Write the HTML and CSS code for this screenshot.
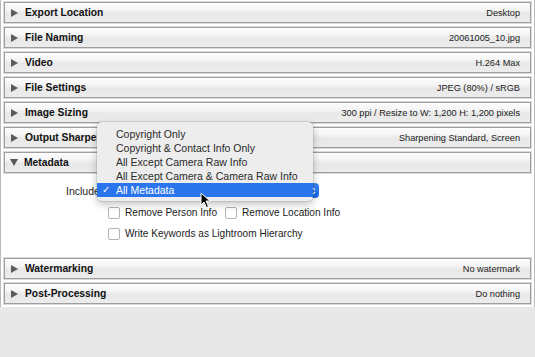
FILE: index.html
```html
<!DOCTYPE html>
<html lang="en">
<head>
  <meta charset="UTF-8">
  <meta name="viewport" content="width=device-width, initial-scale=1.0">
  <title>Export Settings</title>
  <link rel="stylesheet" href="styles.css">
</head>
<body>
  <div class="panel">
    <div class="head"><span class="tri"></span><span class="title">Export Location</span><span class="value">Desktop</span></div>
    <div class="head"><span class="tri"></span><span class="title">File Naming</span><span class="value">20061005_10.jpg</span></div>
    <div class="head"><span class="tri"></span><span class="title">Video</span><span class="value">H.264 Max</span></div>
    <div class="head"><span class="tri"></span><span class="title">File Settings</span><span class="value">JPEG (80%) / sRGB</span></div>
    <div class="head"><span class="tri"></span><span class="title">Image Sizing</span><span class="value">300 ppi / Resize to W: 1,200 H: 1,200 pixels</span></div>
    <div class="head"><span class="tri"></span><span class="title">Output Sharpening</span><span class="value">Sharpening Standard, Screen</span></div>
    <div class="head open"><span class="tri down"></span><span class="title">Metadata</span><span class="value"></span></div>

    <div class="meta-body">
      <div class="include-row">
        <span class="include-label">Include:</span>
        <div class="select">
          <span class="select-text">All Metadata</span>
          <svg class="chev" width="6" height="10" viewBox="0 0 6 10"><path d="M1 4 L3 2 L5 4 M1 6 L3 8 L5 6" fill="none" stroke="#fff" stroke-width="1.2"/></svg>
          <!-- open popup menu -->
          <div class="menu">
            <div class="menu-item">Copyright Only</div>
            <div class="menu-item">Copyright &amp; Contact Info Only</div>
            <div class="menu-item">All Except Camera Raw Info</div>
            <div class="menu-item">All Except Camera &amp; Camera Raw Info</div>
            <div class="menu-item selected"><span class="check">✓</span>All Metadata</div>
          </div>
          <svg class="cursor" width="12" height="17" viewBox="0 0 12 17"><path d="M1 1 L1 13 L4 10 L6.5 15.5 L8.5 14.5 L6 9 L10 9 Z" fill="#000" stroke="#fff" stroke-width="1"/></svg>
        </div>
      </div>
      <div class="checks">
        <div class="check-row">
          <span class="box"></span><span class="check-label">Remove Person Info</span>
          <span class="box second"></span><span class="check-label">Remove Location Info</span>
        </div>
        <div class="check-row">
          <span class="box"></span><span class="check-label">Write Keywords as Lightroom Hierarchy</span>
        </div>
      </div>
    </div>

    <div class="head"><span class="tri"></span><span class="title">Watermarking</span><span class="value">No watermark</span></div>
    <div class="head last"><span class="tri"></span><span class="title">Post-Processing</span><span class="value">Do nothing</span></div>
  </div>
  <div class="footer"></div>
</body>
</html>
```

FILE: styles.css
```css
body {
  margin: 0;
  font-family: "Liberation Sans", Arial, sans-serif;
  background: #e8e8e8;
  color: #1a1a1a;
  overflow: hidden;
}
.panel {
  background: #fff;
  border-left: 1px solid #b9b9b9;
  border-right: 1px solid #b9b9b9;
  padding: 2px 3px 1px 3px;
}
.head {
  display: flex;
  align-items: center;
  height: 19px;
  margin-bottom: 4px;
  border: 1px solid #9e9e9e;
  box-shadow: 0 0 0 1px #dadada, inset 0 1px 0 #fff;
  background: linear-gradient(to bottom, #fcfcfc 0%, #f5f5f5 35%, #e8e8e8 55%, #ececec 100%);
}
.head.open {
  margin-bottom: 0;
}
.head.last {
  margin-bottom: 2px;
}
.tri {
  width: 0;
  height: 0;
  margin-left: 6px;
  border-top: 4.5px solid transparent;
  border-bottom: 4.5px solid transparent;
  border-left: 7px solid #5a5a5a;
}
.tri.down {
  margin-left: 5px;
  border-left: 4.5px solid transparent;
  border-right: 4.5px solid transparent;
  border-top: 7px solid #5a5a5a;
  border-bottom: 0;
}
.title {
  margin-left: 7px;
  font-size: 10.3px;
  font-weight: bold;
  color: #111;
}
.tri.down + .title {
  margin-left: 6px;
}
.value {
  margin-left: auto;
  margin-right: 10px;
  font-size: 9.2px;
  color: #222;
}
.meta-body {
  height: 70px;
  padding-top: 10px;
  margin-bottom: 5px;
}
.include-row {
  display: flex;
  align-items: center;
  height: 15px;
  padding-left: 62px;
}
.include-label {
  width: 31px;
  font-size: 10.5px;
  color: #222;
}
.select {
  position: relative;
  display: flex;
  align-items: center;
  width: 222px;
  height: 15px;
  border-radius: 3px 4px 4px 3px;
  background: linear-gradient(to bottom, #3c8cf7, #1767e6);
}
.select-text {
  margin-left: 19px;
  font-size: 10.5px;
  color: #fff;
}
.chev {
  margin-left: auto;
  margin-right: 3px;
}
.menu {
  position: absolute;
  left: 0;
  top: -61px;
  width: 216px;
  padding: 5px 0 4px;
  border-radius: 5px;
  background: #ededed;
  box-shadow: 0 3px 9px rgba(0, 0, 0, 0.25), 0 0 0 1px rgba(0, 0, 0, 0.08);
}
.menu-item {
  position: relative;
  height: 14px;
  line-height: 14px;
  padding-left: 19px;
  font-size: 10.5px;
  color: #2a2a2a;
}
.menu-item.selected {
  background: #2a75ec;
  color: #fff;
}
.check {
  position: absolute;
  left: 5px;
  font-size: 10px;
}
.cursor {
  position: absolute;
  left: 103px;
  top: 9px;
}
.checks {
  display: flex;
  flex-direction: column;
  gap: 10px;
  margin-top: 9px;
  padding-left: 104px;
}
.check-row {
  display: flex;
  align-items: center;
  height: 11px;
}
.box {
  width: 10px;
  height: 10px;
  border: 1px solid #b3b3b3;
  border-radius: 2px;
  background: #fff;
  margin-right: 5px;
}
.box.second {
  margin-left: 8px;
}
.check-label {
  font-size: 10.1px;
  color: #222;
}
.footer {
  height: 60px;
  background: #e8e8e8;
}
```
